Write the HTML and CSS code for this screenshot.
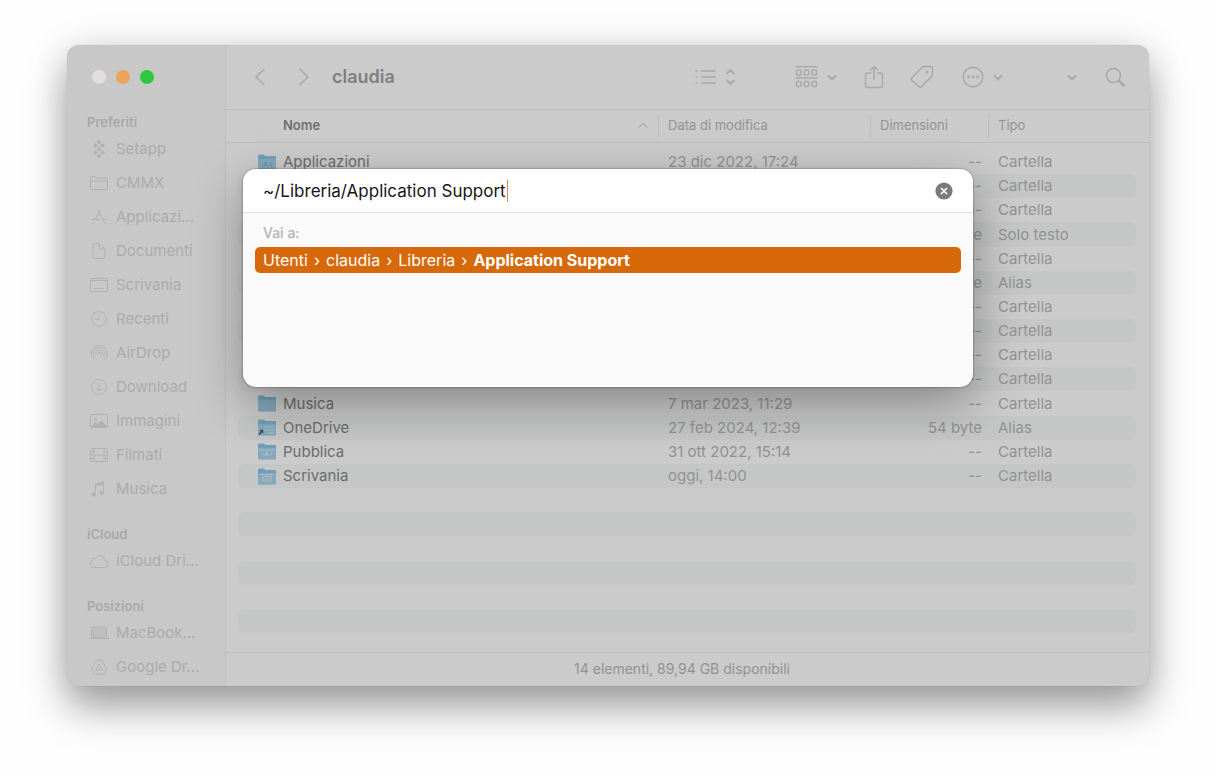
FILE: index.html
```html
<!DOCTYPE html>
<html lang="it">
<head>
<meta charset="utf-8">
<meta name="viewport" content="width=device-width, initial-scale=1">
<title>claudia</title>
<link rel="stylesheet" href="styles.css">
</head>
<body>
<svg class="defs" aria-hidden="true">
  <symbol id="folder" viewBox="0 0 18 17"><path d="M0 2Q0 .5 1.500 .5H6L7.500 2H17Q18 2 18 3V15.500Q18 16.500 17 16.500H1Q0 16.500 0 15.500Z" fill="#6f9fb9"/><path d="M0 5H18V15.500Q18 16 17 16H1Q0 16 0 15.500Z" fill="#84a9bd"/></symbol>
  <symbol id="chev" viewBox="0 0 10 7"><path d="M1 1.300 5 5.300 9 1.300"/></symbol>
</svg>
<main class="window">
  <aside class="sidebar">
    <div class="lights">
      <button class="light close" aria-label="Chiudi"></button>
      <button class="light minimize" aria-label="Riduci"></button>
      <button class="light expand" aria-label="Ingrandisci"></button>
    </div>
    <nav class="places">
      <section>
        <h2>Preferiti</h2>
        <ul>
          <li><a href="#"><svg viewBox="0 0 20 20"><g class="solid"><path d="M10 .5 12.500 3 10 5.500 7.500 3ZM6.500 4 9 6.500 6.500 9 4 6.500ZM13.500 4 16 6.500 13.500 9 11 6.500ZM10 7.500 12.500 10 10 12.500 7.500 10ZM6.500 11 9 13.500 6.500 16 4 13.500ZM13.500 11 16 13.500 13.500 16 11 13.500ZM10 14.500 12.500 17 10 19.500 7.500 17Z"/></g></svg><span>Setapp</span></a></li>
          <li><a href="#"><svg viewBox="0 0 20 20"><path d="M1.500 15V5Q1.500 3.500 3 3.500H6.500L8 5H17Q18.500 5 18.500 6.500V15Q18.500 16.500 17 16.500H3Q1.500 16.500 1.500 15ZM1.500 8H18.500"/></svg><span>CMMX</span></a></li>
          <li><a href="#"><svg viewBox="0 0 20 20"><path d="M8.500 3 15.500 15.500M11.500 3 6 13M4.500 15.500 3.500 17M2 12.500H11M14 12.500H18M15.500 15.500 16.500 17"/></svg><span>Applicazi...</span></a></li>
          <li><a href="#"><svg viewBox="0 0 20 20"><path d="M4 16V4Q4 2.500 5.500 2.500H10.500L16 8V16Q16 17.500 14.500 17.500H5.500Q4 17.500 4 16ZM10.500 2.500V8H16"/></svg><span>Documenti</span></a></li>
          <li><a href="#"><svg viewBox="0 0 20 20"><rect x="1.500" y="3.500" width="17" height="13" rx="1.500"/><path d="M1.500 5.500H18.500M5 13.500H15"/></svg><span>Scrivania</span></a></li>
          <li><a href="#"><svg viewBox="0 0 20 20"><circle cx="10" cy="10" r="7.500"/><path d="M10 5V10.500H6"/></svg><span>Recenti</span></a></li>
          <li><a href="#"><svg viewBox="0 0 20 20"><path d="M5 16.500A8 8 0 1 1 15 16.500M7 14.500A5.500 5.500 0 1 1 13 14.500M8.500 12.500A3 3 0 1 1 11.500 12.500"/><circle cx="10" cy="10" r=".7"/></svg><span>AirDrop</span></a></li>
          <li><a href="#"><svg viewBox="0 0 20 20"><circle cx="10" cy="10" r="7.500"/><path d="M10 6V14M7 11 10 14 13 11"/></svg><span>Download</span></a></li>
          <li><a href="#"><svg viewBox="0 0 20 20"><rect x="1.500" y="3.500" width="17" height="13" rx="1.500"/><circle class="solid" cx="6.500" cy="8" r="1.500"/><path class="solid" d="M2 15 6.500 11 8.500 13 12 9.500 18 15V16H2Z"/></svg><span>Immagini</span></a></li>
          <li><a href="#"><svg viewBox="0 0 20 20"><rect x="1.500" y="3.500" width="17" height="13" rx="1"/><path d="M5 3.500V16.500M15 3.500V16.500M5 10H15M1.500 6.500H5M1.500 10H5M1.500 13.500H5M15 6.500H18.500M15 10H18.500M15 13.500H18.500"/></svg><span>Filmati</span></a></li>
          <li><a href="#"><svg viewBox="0 0 20 20"><path d="M6.500 15V5L14.500 3V13.500"/><path class="solid" d="M6 4.500 15 2.500V5.500L6 7.500Z"/><ellipse class="solid" cx="4.700" cy="15.500" rx="2.300" ry="1.900"/><ellipse class="solid" cx="12.700" cy="14" rx="2.300" ry="1.900"/></svg><span>Musica</span></a></li>
        </ul>
      </section>
      <section>
        <h2>iCloud</h2>
        <ul>
          <li><a href="#"><svg viewBox="0 0 20 20"><path d="M5 16.500A3.600 3.600 0 0 1 3.500 9.500 3 3 0 0 1 7 7 4.500 4.500 0 0 1 15.500 9 3.700 3.700 0 0 1 15.500 16.500Z"/></svg><span>iCloud Dri...</span></a></li>
        </ul>
      </section>
      <section>
        <h2>Posizioni</h2>
        <ul>
          <li><a href="#"><svg viewBox="0 0 20 20"><rect class="screen" x="2.500" y="4" width="15" height="10.500" rx="1.500"/><path d="M0 15.500H20"/></svg><span>MacBook...</span></a></li>
          <li><a href="#"><svg viewBox="0 0 20 20"><path d="M7.500 3H12.500L17.500 12 15 17H5L2.500 12ZM10 7 13.500 13H6.500Z"/></svg><span>Google Dr...</span></a></li>
        </ul>
      </section>
    </nav>
  </aside>

  <div class="content">
    <header class="toolbar">
      <button aria-label="Indietro"><svg width="12" height="20" viewBox="0 0 12 20"><path d="M10.500 2 2 10 10.500 18"/></svg></button>
      <button class="forward" aria-label="Avanti"><svg width="12" height="20" viewBox="0 0 12 20"><path d="M1.500 2 10 10 1.500 18"/></svg></button>
      <h1>claudia</h1>
      <div class="tools">
        <button class="view" aria-label="Vista elenco"><svg width="21" height="20" viewBox="0 0 21 20"><path d="M6 4H20.500M6 10H20.500M6 16H20.500M.5 4H2.500M.5 10H2.500M.5 16H2.500"/></svg><svg width="11" height="18" viewBox="0 0 11 18"><path class="bold" d="M1.500 6 5.500 2 9.500 6M1.500 12 5.500 16 9.500 12"/></svg></button>
        <button class="group" aria-label="Raggruppa"><svg width="23" height="22" viewBox="0 0 23 22"><path d="M.5 .8H22.500M.5 12H22.500"/><rect x="1.500" y="4" width="4.500" height="5" rx="1"/><rect x="9.200" y="4" width="4.500" height="5" rx="1"/><rect x="17" y="4" width="4.500" height="5" rx="1"/><rect x="1.500" y="15.500" width="4.500" height="5" rx="1"/><rect x="9.200" y="15.500" width="4.500" height="5" rx="1"/><rect x="17" y="15.500" width="4.500" height="5" rx="1"/></svg><svg class="bold" width="10" height="7"><use href="#chev"/></svg></button>
        <button class="share" aria-label="Condividi"><svg width="20" height="24" viewBox="0 0 20 24"><path d="M7 8H3.500Q1.500 8 1.500 10V20.500Q1.500 22.500 3.500 22.500H16.500Q18.500 22.500 18.500 20.500V10Q18.500 8 16.500 8H13M10 15V1.500M6 5.200 10 1.500 14 5.200"/></svg></button>
        <button class="tag" aria-label="Tag"><svg width="24" height="24" viewBox="0 0 24 24"><path d="M2 12.500 12 2.500Q13 1.500 14.500 1.500H20Q22.500 1.500 22.500 4V9Q22.500 10.500 21.500 11.500L11.500 21.500Q10 23 8.500 21.500L2 15.500Q.5 14 2 12.500Z"/><circle class="solid" cx="17" cy="7" r="1.500"/></svg></button>
        <button class="more" aria-label="Altre azioni"><svg width="22" height="22" viewBox="0 0 22 22"><circle cx="11" cy="11" r="9.800"/><g class="solid"><circle cx="6.500" cy="11" r="1.400"/><circle cx="11" cy="11" r="1.400"/><circle cx="15.500" cy="11" r="1.400"/></g></svg><svg class="bold" width="10" height="7"><use href="#chev"/></svg></button>
        <button class="extra" aria-label="Altro"><svg class="bold" width="10" height="7"><use href="#chev"/></svg></button>
        <button class="search" aria-label="Cerca"><svg width="21" height="21" viewBox="0 0 21 21"><circle cx="8.500" cy="8.500" r="7"/><path class="handle" d="M13.700 13.700 19.500 19"/></svg></button>
      </div>
    </header>

    <table class="files">
      <thead>
        <tr><th scope="col" class="sorted">Nome<svg width="10" height="7" viewBox="0 0 10 7"><path d="M1 5.500 5 1.500 9 5.500"/></svg></th><th scope="col">Data di modifica</th><th scope="col">Dimensioni</th><th scope="col">Tipo</th></tr>
      </thead>
      <tbody>
        <tr><td><svg><use href="#folder"/><path class="mark" d="M4 13 7 10M6 8 11 13M9 8 6 12M12 8 14 13"/></svg>Applicazioni</td><td>23 dic 2022, 17:24</td><td>--</td><td>Cartella</td></tr>
        <tr><td></td><td></td><td>--</td><td>Cartella</td></tr>
        <tr><td></td><td></td><td>--</td><td>Cartella</td></tr>
        <tr><td></td><td></td><td>byte</td><td>Solo testo</td></tr>
        <tr><td></td><td></td><td>--</td><td>Cartella</td></tr>
        <tr><td></td><td></td><td>byte</td><td>Alias</td></tr>
        <tr><td></td><td></td><td>--</td><td>Cartella</td></tr>
        <tr><td></td><td></td><td>--</td><td>Cartella</td></tr>
        <tr><td></td><td></td><td>--</td><td>Cartella</td></tr>
        <tr><td></td><td></td><td>--</td><td>Cartella</td></tr>
        <tr><td><svg><use href="#folder"/></svg>Musica</td><td>7 mar 2023, 11:29</td><td>--</td><td>Cartella</td></tr>
        <tr><td><svg><use href="#folder"/><path class="mark light-mark" d="M6 8H16M6 11H16M9 14H16"/><path class="alias" d="M1 15.500 4.500 11.500M2 11.500H4.500V14"/></svg>OneDrive</td><td>27 feb 2024, 12:39</td><td>54 byte</td><td>Alias</td></tr>
        <tr><td><svg><use href="#folder"/><path class="mark light-mark" d="M9 8V13M6.500 13 9 9.500 11.500 13M5 12 4 9M13 12 14 9M2 7H16"/></svg>Pubblica</td><td>31 ott 2022, 15:14</td><td>--</td><td>Cartella</td></tr>
        <tr><td><svg><use href="#folder"/><path class="mark light-mark" d="M5 8.500H13V13H5ZM7 11H11M2 6.500H16"/></svg>Scrivania</td><td>oggi, 14:00</td><td>--</td><td>Cartella</td></tr>
        <tr><td></td><td></td><td></td><td></td></tr>
        <tr><td></td><td></td><td></td><td></td></tr>
        <tr><td></td><td></td><td></td><td></td></tr>
        <tr><td></td><td></td><td></td><td></td></tr>
        <tr><td></td><td></td><td></td><td></td></tr>
        <tr><td></td><td></td><td></td><td></td></tr>
      </tbody>
    </table>
    <footer class="status">14 elementi, 89,94 GB disponibili</footer>
  </div>

  <form class="goto" role="dialog" aria-label="Vai alla cartella">
    <div class="field">
      <input type="text" aria-label="Percorso" value="~/Libreria/Application Support">
      <span class="caret"></span>
      <button type="button" aria-label="Cancella"><svg width="18" height="18" viewBox="0 0 18 18"><circle cx="9" cy="9" r="8.600" fill="#7b7b7b" stroke="none"/><path d="M6 6 12 12M12 6 6 12" stroke="#fff" stroke-width="1.700"/></svg></button>
    </div>
    <div class="results">
      <h2>Vai a:</h2>
      <a class="path" href="#"><span>Utenti</span><i>›</i><span>claudia</span><i>›</i><span>Libreria</span><i>›</i><strong>Application Support</strong></a>
    </div>
  </form>
</main>
</body>
</html>
```
FILE: styles.css
```css
* { box-sizing: border-box; }
body {
  margin: 0;
  height: 100vh;
  min-height: 775px;
  padding: 45px 67px 89px;
  display: flex;
  background: #fefefe;
  font: 15px/20px Inter, "Liberation Sans", sans-serif;
  color: #929292;
}
h1, h2, ul { margin: 0; padding: 0; }
button { border: 0; padding: 0; background: none; color: inherit; display: flex; align-items: center; }
a { color: inherit; text-decoration: none; }
svg { flex: none; fill: none; stroke: currentColor; }
.solid { fill: currentColor; stroke: none; }
.defs { position: absolute; width: 0; height: 0; }

.window {
  position: relative;
  flex: 1;
  display: flex;
  min-width: 0;
  border-radius: 12px;
  background: #cbcbcb;
  box-shadow: 0 0 1px rgba(0, 0, 0, .2), 0 22px 40px rgba(0, 0, 0, .36), 0 0 36px rgba(0, 0, 0, .1);
}

.sidebar {
  width: 159px;
  flex: none;
  padding: 24px 20px 0;
  background: #c8c8c8;
  border-right: 1px solid #bebebe;
  border-radius: 12px 0 0 12px;
  color: #ababab;
}
.lights { display: flex; align-items: center; gap: 10px; height: 16px; padding-left: 5px; }
.light { width: 14px; height: 14px; border-radius: 50%; }
.close { background: #e3dedb; }
.minimize { background: #eca35a; }
.expand { background: #2bc840; }
.places { padding-top: 28px; display: flex; flex-direction: column; gap: 19px; }
.places h2 { font-size: 13px; line-height: 19px; font-weight: 600; color: #a8a8a8; }
.places ul { list-style: none; }
.places a { display: flex; align-items: center; gap: 7px; height: 34px; padding-left: 2px; white-space: nowrap; }
.places svg { width: 20px; height: 20px; color: #b2b2b2; }
.screen { fill: #bebebe; }

.content { flex: 1; min-width: 0; display: flex; flex-direction: column; }
.toolbar {
  height: 65px;
  padding: 0 23px 0 28px;
  display: flex;
  align-items: center;
  border-bottom: 1px solid #bebebe;
  color: #a9a9a9;
}
.toolbar svg { stroke-width: 1.5; }
.toolbar .bold { stroke-width: 2; }
.forward { margin-left: 32px; }
.toolbar h1 { margin-left: 22px; font-size: 18px; line-height: 24px; font-weight: 600; color: #7f7f7f; }
.tools { margin-left: auto; display: flex; align-items: center; }
.view, .group, .more { gap: 9px; }
.group { margin-left: 59px; }
.share { margin-left: 27px; }
.tag { margin-left: 26px; }
.more { margin-left: 28px; }
.extra { margin-left: 64px; }
.search { margin-left: 28px; }
.toolbar .handle { stroke-width: 2.5; }

.files { flex: 1; display: flex; flex-direction: column; }
.files tr { display: grid; grid-template-columns: 1fr 212px 118px 148px; align-items: center; }
.files thead { display: block; padding: 0 13px 0 12px; border-bottom: 1px solid #bebebe; }
.files thead tr { height: 32px; }
.files th {
  display: flex;
  align-items: center;
  justify-content: space-between;
  height: 24px;
  padding: 0 10px 2px 9px;
  font-size: 13px;
  font-weight: 400;
  border-left: 1px solid #bebebe;
}
.files th.sorted { padding-left: 45px; border-left: 0; font-weight: 600; color: #6e6e6e; }
.sorted svg { color: #929292; }
.files tbody { flex: 1; display: grid; grid-auto-rows: 1fr; padding: 7px 13px 19px 12px; }
.files tbody tr { border-radius: 6px; }
.files tbody tr:nth-child(even) { background: #c5c7c6; }
.files td { padding: 0 6px 0 10px; white-space: nowrap; }
.files td:first-child { display: flex; align-items: center; gap: 7px; padding-left: 20px; color: #6c6c6c; }
.files td:nth-child(3) { text-align: right; }
.files td svg { width: 18px; height: 17px; stroke: none; }
.files .mark { stroke: #6090ac; }
.files .light-mark { stroke: #b0bcc2; }
.files .alias { stroke: #4c4c4c; stroke-width: 1.5; }
.status { height: 34px; border-top: 1px solid #bebebe; text-align: center; font-size: 14px; line-height: 32px; padding-right: 11px; }

.goto {
  position: absolute;
  top: 124px;
  left: 176px;
  right: 176px;
  min-height: 218px;
  border-radius: 13px;
  background: #fafafa;
  overflow: hidden;
  box-shadow: 0 0 2px rgba(0, 0, 0, .6), 0 16px 48px rgba(0, 0, 0, .34);
}
.field { position: relative; display: flex; align-items: center; height: 44px; padding: 0 20px; background: #fff; border-bottom: 1px solid #e3dfdd; }
.field input { flex: 1; min-width: 0; height: 30px; padding: 0; border: 0; outline: 0; background: none; font: 17px/24px Inter, "Liberation Sans", sans-serif; color: #161616; }
.caret { position: absolute; left: 264px; top: 11px; width: 1px; height: 22px; background: #e3863a; }
.results { padding: 10px 12px; }
.results h2 { padding-left: 8px; font-size: 14px; line-height: 20px; font-weight: 500; color: #b3b3b3; }
.path { display: flex; align-items: center; gap: 6px; height: 26px; margin-top: 4px; padding: 0 8px; border-radius: 5px; background: #d7690b; color: #fff; font-size: 16px; white-space: nowrap; }
.path i { font-style: normal; }
.path strong { font-weight: 700; }
```
